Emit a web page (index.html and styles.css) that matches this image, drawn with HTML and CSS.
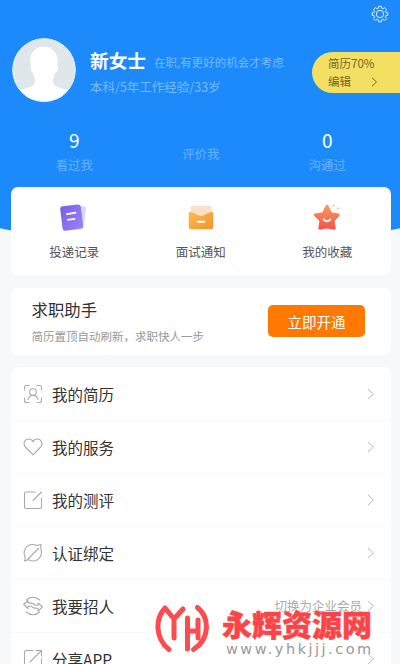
FILE: index.html
```html
<!DOCTYPE html>
<html lang="zh-CN">
<head>
<meta charset="utf-8">
<title>我的</title>
<link rel="stylesheet" href="styles.css">
</head>
<body>
<svg class="defs" width="0" height="0"><defs>
<linearGradient id="violet" x1="0" y1="0" x2="1" y2="1"><stop offset="0" stop-color="#7560e8"/><stop offset="1" stop-color="#9b83fb"/></linearGradient>
<linearGradient id="amber" x1="0" y1="0" x2="1" y2="1"><stop offset="0" stop-color="#f9bd4d"/><stop offset="1" stop-color="#f29432"/></linearGradient>
<linearGradient id="coral" x1="0" y1="0" x2="0" y2="1"><stop offset="0" stop-color="#f99a5c"/><stop offset="1" stop-color="#f5544d"/></linearGradient>
</defs></svg>
<main class="screen">
  <div class="backdrop"></div>
  <header class="header">
    <div class="toolbar">
      <svg class="gear" viewBox="0 0 18 18" width="18" height="18"><path d="M7.6 1.3h2.800l.3 2 1.100.5 1.800-1.200 1.900 1.900-1.200 1.800.5 1.100 2 .3v2.600l-2 .4-.5 1.100 1.200 1.800-1.900 1.900-1.800-1.200-1.100.5-.3 2H7.600l-.3-2-1.100-.5-1.800 1.200-1.900-1.900 1.200-1.800-.5-1.100-2-.4V7.700l2-.3.5-1.100-1.200-1.800 1.900-1.900 1.800 1.200 1.100-.5z"/><circle cx="9" cy="9" r="3.700"/></svg>
    </div>
    <div class="profile">
      <svg class="avatar" viewBox="0 0 64 64" width="64" height="64"><circle cx="32" cy="32" r="31.500" fill="#dfe7ea"/><path fill="#fff" d="M19 28c-2-7 0-14 5-17 4-3 9-2 11-2l1-1 1 2 2-1 0 2c5 2 8 8 6 17 2 0 1 6-2 7-1 4-2 5-2 8 0 5 5 7 15 9-12 18-36 18-48 0 10-2 15-4 15-9 0-3-1-4-2-8-2-1-3-6-2-7z"/><circle cx="32" cy="32" r="31.500" fill="none" stroke="#d8ebf9"/></svg>
      <div class="person">
        <div class="name-line"><h1>新女士</h1><span>在职,有更好的机会才考虑</span></div>
        <p>本科/5年工作经验/33岁</p>
      </div>
      <div class="resume">
        <div>简历70%</div>
        <div class="edit">编辑<svg viewBox="0 0 7 10" width="7" height="10"><path d="M1 .8 5.500 5 1 9.200"/></svg></div>
      </div>
    </div>
    <div class="stats">
      <div><b>9</b><span>看过我</span></div>
      <div class="single"><span>评价我</span></div>
      <div><b>0</b><span>沟通过</span></div>
    </div>
  </header>
  <section class="card services">
    <div><svg viewBox="0 0 36 36" width="36" height="36"><path d="m16 5 13 2q2 0 2 2l-3 19q0 2-2 2l-9-1z" fill="#ddd5fc"/><rect x="4.500" y="5.500" width="22" height="26" rx="3" transform="rotate(-7 16 18)" fill="url(#violet)"/><path d="m10.500 15 9-1.500m-8 7.500 7-1" stroke="#fff" stroke-width="2" stroke-linecap="round"/></svg><span>投递记录</span></div>
    <div><svg viewBox="0 0 36 36" width="36" height="36"><path d="M9 6h18q2 0 2 2l-1 8-10 6-10-6-1-8q0-2 2-2z" fill="#fbdfc6"/><path d="M5 14q0-2 2-1.500l9 4q2 .8 4 0l9-4q2-.5 2 1.500v14q0 3-3 3H8q-3 0-3-3z" fill="url(#amber)"/><path d="M14.500 23h7" stroke="#fff" stroke-width="2" stroke-linecap="round"/></svg><span>面试通知</span></div>
    <div><svg viewBox="0 0 36 36" width="36" height="36"><path d="m18 6.500 4 8 8 1.200-5.500 6 1.200 8.300L18 28.500 10.300 30l1.200-8.300-6-6 8.500-1.200z" fill="url(#coral)" stroke="url(#coral)" stroke-width="3" stroke-linejoin="round"/><path d="M14.500 20.500q3.500 4 7 0" fill="none" stroke="#fff" stroke-width="2" stroke-linecap="round"/><circle cx="25" cy="6" r="1.300" fill="#fbd0bd"/><circle cx="29.500" cy="9" r="1.300" fill="#fbd0bd"/></svg><span>我的收藏</span></div>
  </section>
  <section class="card assistant">
    <div><h2>求职助手</h2><p>简历置顶自动刷新，求职快人一步</p></div>
    <button>立即开通</button>
  </section>
  <nav class="card menu">
    <a><svg class="icon" viewBox="0 0 20 20"><path d="M1.500 6V3.500q0-2 2-2H6m8 0h2.500q2 0 2 2V6m0 8v2.500q0 2-2 2H14m-8 0H3.500q-2 0-2-2V14"/><circle cx="10" cy="8" r="3.300"/><path d="M5 15.500q1-4 5-4t5 4"/></svg><span>我的简历</span><svg class="chevron" viewBox="0 0 8 12"><path d="m1 1 5.500 5L1 11"/></svg></a>
    <a><svg class="icon" viewBox="0 0 20 20"><path d="M10 17.800 2.800 10.500C-.8 6.500 2 2 5.600 2 8 2 9.500 3.700 10 4.800 10.500 3.700 12 2 14.400 2c3.600 0 6.400 4.500 2.800 8.500z"/></svg><span>我的服务</span><svg class="chevron" viewBox="0 0 8 12"><path d="m1 1 5.500 5L1 11"/></svg></a>
    <a><svg class="icon" viewBox="0 0 20 20"><path d="M12 2H3q-1.500 0-1.500 1.500v13.500q0 1.500 1.500 1.500h14q1.500 0 1.500-1.500V8M10 10.500 18.500 2"/></svg><span>我的测评</span><svg class="chevron" viewBox="0 0 8 12"><path d="m1 1 5.500 5L1 11"/></svg></a>
    <a><svg class="icon" viewBox="0 0 20 20"><path d="M18 1.500c-.5 2-.5 2.500 0 4.500 1.500 6-1.500 12-8 12-2.500 0-4-1-5-1.500-1 1-2 1.500-3.500 1.500 1-1.500.8-2.500.5-4C-.5 8 3 1.500 9.500 1.500c2.500 0 3.500.7 4.500 1.200C15.500 2 16.500 1.500 18 1.500zM5 16 15.500 5.500"/></svg><span>认证绑定</span><svg class="chevron" viewBox="0 0 8 12"><path d="m1 1 5.500 5L1 11"/></svg></a>
    <a><svg class="icon" viewBox="0 0 20 20"><path d="M3.500 4C7 .3 13 .3 16.500 4M3.500 16c3.500 3.700 9.500 3.700 13 0M5 4.500.7 8.500 5 12.500v-2.300h3.500q1.500 2.500 6.500 2v3l4.500-4.200L15 7v2.200h-3Q10.500 6.500 5 7z"/></svg><span>我要招人</span><em>切换为企业会员</em><svg class="chevron" viewBox="0 0 8 12"><path d="m1 1 5.500 5L1 11"/></svg></a>
    <a><svg class="icon" viewBox="0 0 20 20"><path d="M10 1.500H3q-1.500 0-1.500 1.500v14q0 1.500 1.500 1.500h14q1.500 0 1.500-1.500v-7M13 1.500h5.500V7M7 13 18 2"/></svg><span>分享APP</span><svg class="chevron" viewBox="0 0 8 12"><path d="m1 1 5.500 5L1 11"/></svg></a>
  </nav>
  <aside class="watermark">
    <svg viewBox="0 0 56 50" width="56" height="50"><path d="M15 45.500C1 34 1 15 11 4L20 15 29 5M20 15v19M33.500 14v31M33.500 27H44M44 16v18M43.500 3.500C56 14 56 35 39.500 45.500"/></svg>
    <div><strong>永辉资源网</strong><small>www.yhkjjj.com</small></div>
  </aside>
</main>
</body>
</html>
```
FILE: styles.css
```css
* { box-sizing: border-box; }
body { margin: 0; background: #f7f8fa; font-family: "Noto Sans CJK SC", sans-serif; color: #333; }
h1, h2, p { margin: 0; font-weight: 400; }
.defs { position: absolute; }
.screen { position: relative; height: 664px; overflow: hidden; padding: 0 9px 0 11px; }
.backdrop { position: absolute; z-index: -1; left: -100px; right: -100px; top: -40px; height: 287px; background: #1c8afa; border-radius: 0 0 50% 50% / 0 0 74px 74px; }
.header { height: 187px; color: #fff; }
.toolbar { height: 37px; padding: 5px 2px 0 0; display: flex; justify-content: flex-end; }
.gear { fill: none; stroke: #e2f0ff; stroke-width: 1; }
.profile { display: flex; height: 66px; margin-right: -9px; padding-left: 1px; }
.avatar { flex: none; margin-top: 1px; border-radius: 50%; }
.person { flex: 1; padding: 10px 0 0 14px; white-space: nowrap; }
.name-line { display: flex; align-items: center; height: 26px; gap: 8px; }
h1 { font-size: 18.7px; line-height: 26px; font-weight: 700; }
.name-line span { font-size: 11.5px; line-height: 18px; color: #78baff; padding-top: 4px; }
.person p { font-size: 12.5px; line-height: 20px; margin-top: 4px; color: #78baff; }
.resume { width: 88px; height: 41px; margin-top: 15px; padding: 2px 0 0 16px; border-radius: 21px 0 0 21px; background: #f3df62; color: #74662b; font-size: 11.5px; line-height: 18px; }
.edit { display: flex; align-items: center; gap: 20px; }
.edit svg { fill: none; stroke: #74662b; margin-top: 2px; }
.stats { display: grid; grid-template-columns: repeat(3, 126.5px); padding-top: 24px; text-align: center; }
.stats b { display: block; font-size: 19px; font-weight: 400; line-height: 26px; }
.stats span { display: block; font-size: 12.3px; line-height: 20px; margin-top: 2px; color: #69b2ff; }
.stats .single { padding-top: 15px; }
.card { background: #fff; border-radius: 7px; }
.services { height: 88px; display: grid; grid-template-columns: repeat(3, 126.5px); text-align: center; padding-top: 12px; }
.services div { display: flex; flex-direction: column; align-items: center; }
.services svg { padding: 1px; }
.services span { font-size: 12.5px; line-height: 20px; margin-top: 7px; color: #555; }
.assistant { height: 67px; margin-top: 13px; padding: 0 26px 0 20.5px; display: flex; justify-content: space-between; }
.assistant h2 { font-size: 16.4px; line-height: 24px; margin-top: 9px; }
.assistant p { font-size: 11.5px; line-height: 18px; margin-top: 6px; color: #999; }
.assistant button { width: 97px; height: 32px; margin-top: 17px; padding: 0; border: 0; border-radius: 5px; background: #ff7800; color: #fff; font: 14.5px/33px "Noto Sans CJK SC", sans-serif; }
.menu { margin-top: 12px; padding-top: 1px; border-radius: 7px 7px 0 0; }
.menu a { display: flex; align-items: center; height: 53px; padding: 0 16px 0 12px; border-bottom: 1px solid #fafafb; }
.icon { width: 20px; height: 20px; margin-right: 9px; fill: none; stroke: #aaa; stroke-width: 1.1; stroke-linecap: round; stroke-linejoin: round; }
.menu span { font-size: 15.5px; line-height: 24px; flex: 1; }
.menu em { font-size: 12.5px; line-height: 18px; font-style: normal; color: #aaa; margin-right: 5px; }
.chevron { width: 8px; height: 12px; fill: none; stroke: #bbb; stroke-width: 1; }
.watermark { position: absolute; left: 154px; top: 604px; display: flex; }
.watermark svg { fill: none; stroke: #fb4d50; stroke-width: 5; stroke-linecap: round; stroke-linejoin: round; }
.watermark div { padding-left: 12px; }
.watermark strong { display: block; font-size: 30px; line-height: 38px; font-weight: 900; color: #fb4447; -webkit-text-stroke: .5px #fb4447; white-space: nowrap; }
.watermark small { display: block; font: 14.5px/16px "DejaVu Sans", sans-serif; letter-spacing: 2.5px; color: #999; padding-left: 4px; margin-top: -1px; white-space: nowrap; }
```
